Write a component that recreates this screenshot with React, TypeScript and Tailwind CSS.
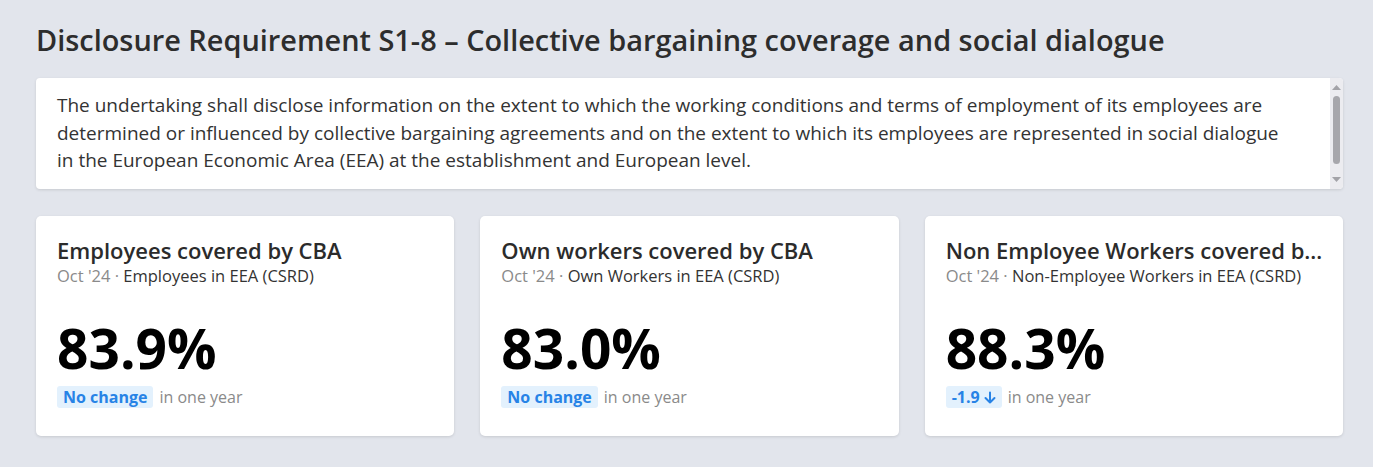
import React from 'react';

type Metric = {
  title: string;
  date: string;
  population: string;
  value: string;
  change: string;
  down?: boolean;
};

const METRICS: Metric[] = [
  { title: 'Employees covered by CBA', date: "Oct '24", population: 'Employees in EEA (CSRD)', value: '83.9%', change: 'No change' },
  { title: 'Own workers covered by CBA', date: "Oct '24", population: 'Own Workers in EEA (CSRD)', value: '83.0%', change: 'No change' },
  { title: 'Non Employee Workers covered by CBA', date: "Oct '24", population: 'Non-Employee Workers in EEA (CSRD)', value: '88.3%', change: '-1.9', down: true },
];

const MetricCard: React.FC<{ metric: Metric }> = ({ metric }) => (
  <div className="flex h-[220px] min-w-0 flex-col rounded-[5px] bg-white pl-[21px] pr-4 pt-5 shadow-[0_1px_3px_rgba(0,0,0,0.12)]">
    <h3 className="truncate text-[22px] font-semibold leading-7 text-[#2b2b2b]">{metric.title}</h3>
    <p className="text-[16.5px] leading-6 text-[#333]">
      <span className="text-[#8a8a8a]">{metric.date} · </span>
      {metric.population}
    </p>
    <div className="mt-8 text-[55px] font-bold leading-[56px] text-black">{metric.value}</div>
    <div className="mt-[9px] flex items-center gap-[6px]">
      <span className="flex h-[22px] items-center gap-1 rounded-[3px] bg-[#e3f1fd] px-[6px] text-[16px] font-bold text-[#2783e6]">
        {metric.change}
        {metric.down && (
          <svg width="12" height="13" viewBox="0 0 12 13" fill="none" stroke="currentColor" strokeWidth="2" strokeLinecap="round" strokeLinejoin="round">
            <path d="M6 1.5v10M1.5 7l4.5 4.5L10.5 7" />
          </svg>
        )}
      </span>
      <span className="text-[16px] text-[#8a8a8a]">in one year</span>
    </div>
  </div>
);

const App: React.FC = () => {
  return (
    <div className="min-h-screen bg-[#e2e5ec] pl-9 pr-[30px] pt-[18px] pb-8 font-['Open_Sans',sans-serif]">
      <h1 className="text-[28.9px] font-semibold leading-[44px] text-[#2d2d2d]">
        Disclosure Requirement S1-8 – Collective bargaining coverage and social dialogue
      </h1>

      {/* Description with scroll track */}
      <div className="mt-4 flex h-[111px] overflow-hidden rounded-[4px] bg-white shadow-[0_1px_3px_rgba(0,0,0,0.12)]">
        <p className="min-w-0 flex-1 pl-[21px] pr-[34px] pt-[14px] text-[19px] leading-[27.5px] text-[#333]">
          The undertaking shall disclose information on the extent to which the working conditions and terms of employment of its employees are
          determined or influenced by collective bargaining agreements and on the extent to which its employees are represented in social dialogue
          in the European Economic Area (EEA) at the establishment and European level.
        </p>
        <div className="flex w-[13px] shrink-0 flex-col items-center bg-[#ececf0] py-[7px]">
          <svg width="9" height="5" viewBox="0 0 9 5" className="text-[#a3a3a8]">
            <path d="M0 5L4.5 0L9 5Z" fill="currentColor" />
          </svg>
          <div className="mt-[6px] h-[68px] w-[7px] rounded-full bg-[#a7a7ac]" />
          <div className="flex-1" />
          <svg width="9" height="5" viewBox="0 0 9 5" className="text-[#a3a3a8]">
            <path d="M0 0L4.5 5L9 0Z" fill="currentColor" />
          </svg>
        </div>
      </div>

      {/* Metrics */}
      <div className="mt-[27px] grid grid-cols-3 gap-[26px]">
        {METRICS.map(m => (
          <MetricCard key={m.title} metric={m} />
        ))}
      </div>
    </div>
  );
};

export default App;
